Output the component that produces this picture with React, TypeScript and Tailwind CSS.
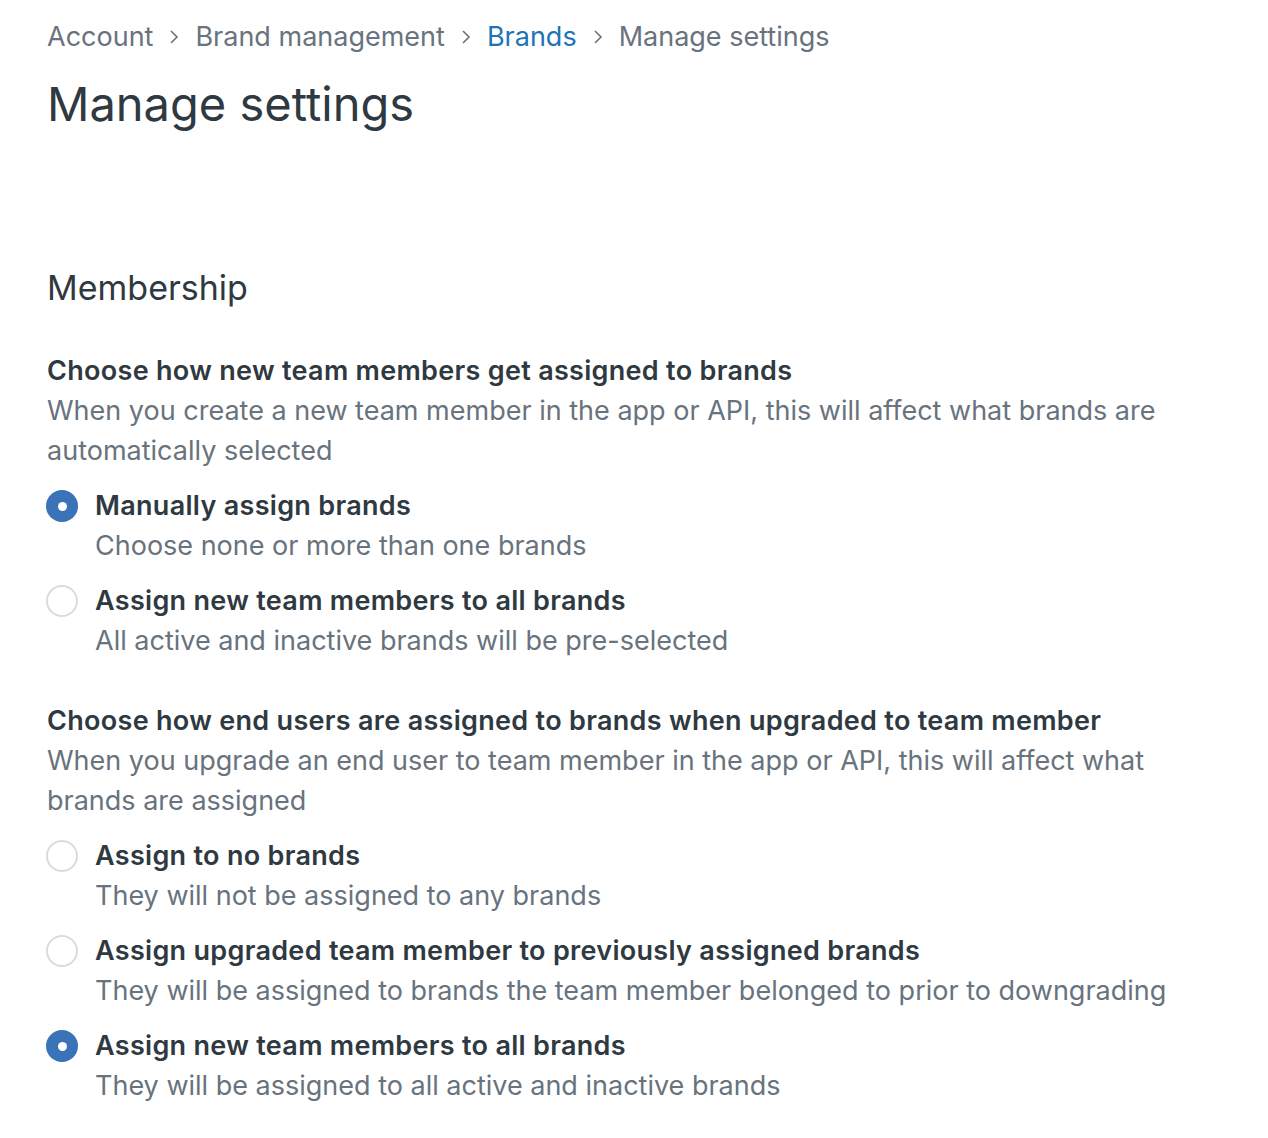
import { useState } from 'react'

type Option = { id: string; label: string; hint: string }

const groupOne: Option[] = [
  { id: 'manual', label: 'Manually assign brands', hint: 'Choose none or more than one brands' },
  { id: 'all', label: 'Assign new team members to all brands', hint: 'All active and inactive brands will be pre-selected' },
]

const groupTwo: Option[] = [
  { id: 'none', label: 'Assign to no brands', hint: 'They will not be assigned to any brands' },
  { id: 'previous', label: 'Assign upgraded team member to previously assigned brands', hint: 'They will be assigned to brands the team member belonged to prior to downgrading' },
  { id: 'all', label: 'Assign new team members to all brands', hint: 'They will be assigned to all active and inactive brands' },
]

function Chevron() {
  return (
    <svg width="12" height="18" viewBox="0 0 12 18" fill="none" stroke="currentColor" strokeWidth="1.6" className="mx-[15px] text-[#68737d]">
      <polyline points="3 3 9 9 3 15" />
    </svg>
  )
}

function RadioGroup({ options, value, onChange }: { options: Option[]; value: string; onChange: (v: string) => void }) {
  return (
    <div className="mt-[15px] flex flex-col gap-[15px]">
      {options.map(opt => {
        const checked = opt.id === value
        return (
          <label key={opt.id} className="flex cursor-pointer items-start gap-[17px]" onClick={() => onChange(opt.id)}>
            <span
              className={
                checked
                  ? '-ml-px mt-[4px] flex h-[32px] w-[32px] shrink-0 items-center justify-center rounded-full bg-[#3b73b9]'
                  : '-ml-px mt-[4px] flex h-[32px] w-[32px] shrink-0 items-center justify-center rounded-full border-2 border-[#d8dcde] bg-white'
              }
            >
              {checked && <span className="h-[9px] w-[9px] rounded-full bg-white" />}
            </span>
            <span>
              <span className="block font-semibold tracking-[0.3px] text-[#2f3941]">{opt.label}</span>
              <span className="block text-[#68737d]">{opt.hint}</span>
            </span>
          </label>
        )
      })}
    </div>
  )
}

export default function App() {
  const [newMember, setNewMember] = useState('manual')
  const [upgraded, setUpgraded] = useState('all')

  return (
    <div className="min-h-screen bg-white px-[47px] pt-[15px] text-[27px] leading-[40px] text-[#2f3941]" style={{ fontFamily: 'Inter, "Noto Sans", sans-serif' }}>
      {/* Breadcrumb */}
      <nav className="flex items-center leading-[44px] text-[#68737d]">
        <span>Account</span>
        <Chevron />
        <span>Brand management</span>
        <Chevron />
        <a className="text-[#1f73b7]">Brands</a>
        <Chevron />
        <span>Manage settings</span>
      </nav>

      <h1 className="mt-[17px] text-[47px] leading-[56px] font-normal text-[#2f3941]">Manage settings</h1>

      <section className="mt-[132px]">
        <h2 className="text-[34px] leading-[48px] text-[#2f3941]">Membership</h2>

        <div className="mt-[39px]">
          <h3 className="font-semibold tracking-[0.3px]">Choose how new team members get assigned to brands</h3>
          <p className="text-[#68737d]">
            When you create a new team member in the app or API, this will affect what brands are automatically selected
          </p>
          <RadioGroup options={groupOne} value={newMember} onChange={setNewMember} />
        </div>

        <div className="mt-[40px]">
          <h3 className="font-semibold tracking-[0.3px]">Choose how end users are assigned to brands when upgraded to team member</h3>
          <p className="max-w-[1120px] text-[#68737d]">
            When you upgrade an end user to team member in the app or API, this will affect what brands are assigned
          </p>
          <RadioGroup options={groupTwo} value={upgraded} onChange={setUpgraded} />
        </div>
      </section>
    </div>
  )
}
